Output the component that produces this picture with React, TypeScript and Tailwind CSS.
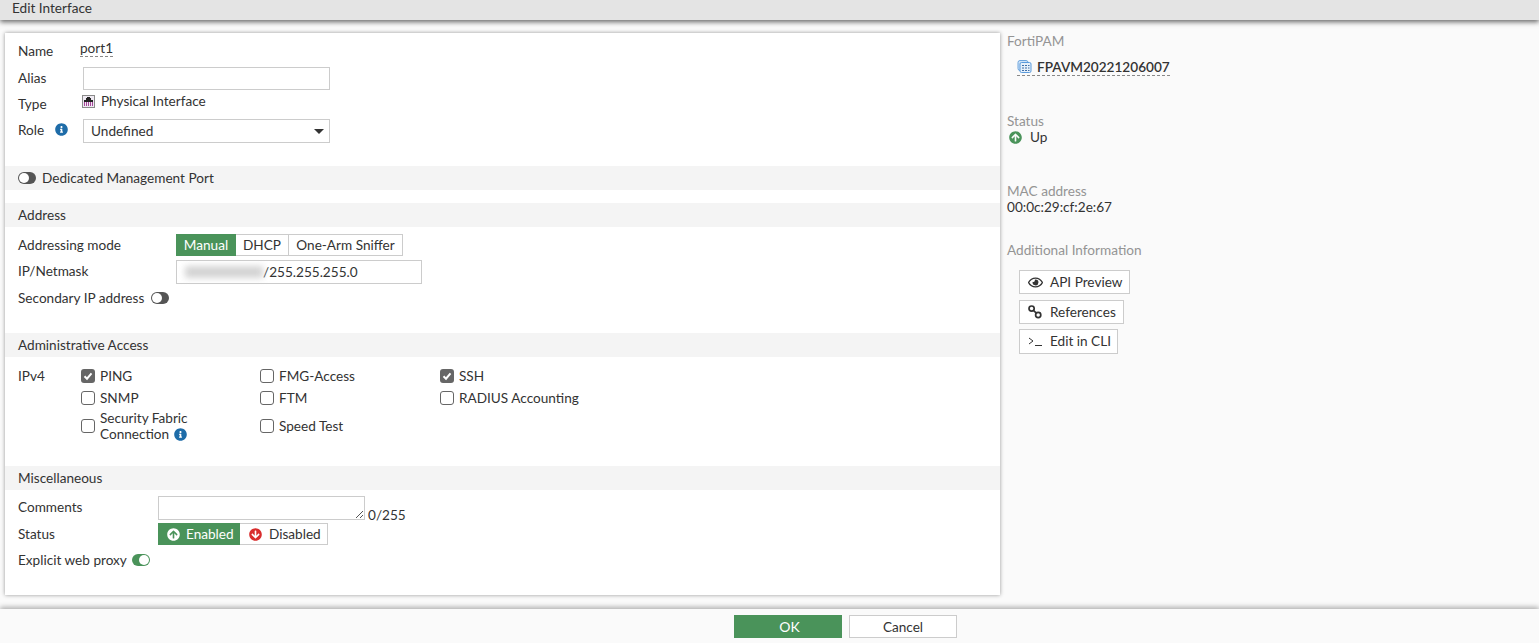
import React from "react";
import { FaInfoCircle, FaArrowCircleUp, FaArrowCircleDown, FaRegEye } from "react-icons/fa";

function Toggle({ on }: { on?: boolean }) {
    return (
        <span
            className={
                on
                    ? "flex h-[12px] w-[18px] shrink-0 items-center justify-end rounded-full bg-[#4a935a] pr-[1px]"
                    : "flex h-[12px] w-[18px] shrink-0 items-center justify-start rounded-full bg-[#555555] pl-[1px]"
            }
        >
            <span className="size-[10px] rounded-full bg-white" />
        </span>
    );
}

function Check({ checked }: { checked?: boolean }) {
    return (
        <span
            className={
                checked
                    ? "flex size-[14px] shrink-0 items-center justify-center rounded-[3px] bg-[#666666]"
                    : "flex size-[14px] shrink-0 items-center justify-center rounded-[3px] border border-[#666666] bg-white"
            }
        >
            {checked && (
                <svg viewBox="0 0 12 12" className="size-[12px]">
                    <path d="M2.5 6.2 L5 8.7 L9.5 3.4" fill="none" stroke="#fff" strokeWidth="2" />
                </svg>
            )}
        </span>
    );
}

function SectionHead({ children }: { children: React.ReactNode }) {
    return <div className="flex h-6 items-center gap-[6px] bg-[#f4f4f4] pl-[13px]">{children}</div>;
}

function Option({ checked, children }: { checked?: boolean; children: React.ReactNode }) {
    return (
        <div className="flex h-[22px] items-center gap-[5px]">
            <Check checked={checked} />
            <span>{children}</span>
        </div>
    );
}

function PortIcon() {
    return (
        <svg viewBox="0 0 13 13" className="size-[13px]">
            <rect x="0.5" y="0.5" width="12" height="12" fill="#efeaf2" stroke="#8a8a8a" />
            <path d="M2 7 V5 H4 V3 H5 V2 H8 V3 H9 V5 H11 V7 Z" fill="#222" />
            <path d="M2.5 11 V7 M4.5 11 V7 M6.5 11 V7 M8.5 11 V7 M10.5 11 V7" stroke="#a6479a" strokeWidth="1" />
        </svg>
    );
}

function DeviceIcon() {
    return (
        <svg viewBox="0 0 15 15" className="size-[15px]">
            <rect x="1" y="1.5" width="10" height="10" rx="2" fill="#cfe3f7" stroke="#6ea6de" />
            <rect x="3" y="3.5" width="11" height="10" rx="1.5" fill="#e6f0fa" stroke="#5b9bdc" />
            <path d="M5 6.5 H12.5 M5 9 H12.5 M5 11.5 H12.5" stroke="#3f6fa8" strokeWidth="1.2" strokeDasharray="2 1" />
        </svg>
    );
}

function LinkIcon() {
    return (
        <svg viewBox="0 0 14 14" className="size-[14px]">
            <circle cx="3.6" cy="3.6" r="2.6" fill="none" stroke="#333" strokeWidth="1.7" />
            <circle cx="10.2" cy="10" r="2.6" fill="none" stroke="#333" strokeWidth="1.7" />
            <path d="M5.4 5.4 L8.4 8.2" stroke="#333" strokeWidth="1.7" />
        </svg>
    );
}

function CliIcon() {
    return (
        <svg viewBox="0 0 15 12" className="h-3 w-[15px]">
            <path d="M1 3 L5 6 L1 9" fill="none" stroke="#333" strokeWidth="1" />
            <path d="M7 10.5 H14" stroke="#333" strokeWidth="1" />
        </svg>
    );
}

function SideButton({ icon, children, wide }: { icon: React.ReactNode; children: React.ReactNode; wide: string }) {
    return (
        <div className={"flex items-center border border-[#cccccc] bg-white pl-2 " + wide}>
            <span className="flex w-[22px] shrink-0 justify-start">{icon}</span>
            <span>{children}</span>
        </div>
    );
}

export default function App() {
    return (
        <div className="flex h-[643px] w-full flex-col overflow-hidden bg-[#fafafa] font-['Lato','Liberation_Sans',sans-serif] text-[13.6px] leading-4 text-[#333333]">
            <div className="relative z-10 h-5 shrink-0 bg-[#e4e4e4] pl-3 shadow-[0_2px_5px_rgba(0,0,0,0.6)]">
                Edit Interface
            </div>

            <div className="flex min-h-0 flex-1 pl-[5px] pt-[13px]">
                {/* main form */}
                <div className="h-[562px] w-[995px] shrink-0 bg-white shadow-[0_0_4px_rgba(0,0,0,0.4)]">
                    <div className="h-[133px] pl-[13px]">
                        <div className="flex h-[33px] pt-[10px]">
                            <span className="w-[62px]">Name</span>
                            <span className="-mt-[3px] h-[17px] border-b border-dashed border-[#888888]">port1</span>
                        </div>
                        <div className="flex h-6 items-center">
                            <span className="w-[65px]">Alias</span>
                            <div className="h-[23px] w-[247px] border border-[#cccccc] bg-white" />
                        </div>
                        <div className="flex h-[29px] pt-[6px]">
                            <span className="w-[64px]">Type</span>
                            <span className="-mt-[3px] flex h-4 items-center gap-[6px]">
                                <PortIcon />
                                Physical Interface
                            </span>
                        </div>
                        <div className="flex h-6 items-center">
                            <span className="-mt-[2px] w-[37px]">Role</span>
                            <span className="flex w-[28px] justify-start">
                                <FaInfoCircle className="-mt-[3px] text-[13px] text-[#1e6ca8]" />
                            </span>
                            <div className="flex h-6 w-[247px] items-center justify-between border border-[#cccccc] bg-white pl-[7px] pr-[3px]">
                                <span>Undefined</span>
                                <svg viewBox="0 0 12 6" className="mr-[2px] h-[5px] w-[10px]">
                                    <path d="M0 0 H12 L6 6 Z" fill="#333" />
                                </svg>
                            </div>
                        </div>
                    </div>

                    <SectionHead>
                        <Toggle />
                        <span>Dedicated Management Port</span>
                    </SectionHead>
                    <div className="h-[13px]" />

                    <SectionHead>Address</SectionHead>
                    <div className="h-[106px] pl-[13px] pt-[7px]">
                        <div className="flex h-[22px] items-center">
                            <span className="w-[158px]">Addressing mode</span>
                            <div className="flex h-[22px]">
                                <span className="flex w-[60px] items-center justify-center bg-[#4a935a] text-white">Manual</span>
                                <span className="flex w-[53px] items-center justify-center border-y border-r border-[#cccccc]">DHCP</span>
                                <span className="flex w-[114px] items-center justify-center border-y border-r border-[#cccccc]">One-Arm Sniffer</span>
                            </div>
                        </div>
                        <div className="mt-[4px] flex h-6 items-center">
                            <span className="-mt-[2px] w-[158px]">IP/Netmask</span>
                            <div className="flex h-6 w-[246px] items-center border border-[#cccccc] bg-white pl-2">
                                <span className="h-[12px] w-[78px] bg-[#d4d4d4] blur-[3px]" />
                                <span>/255.255.255.0</span>
                            </div>
                        </div>
                        <div className="mt-[2px] flex h-6 items-center gap-[7px]">
                            <span>Secondary IP address</span>
                            <Toggle />
                        </div>
                    </div>

                    <SectionHead>Administrative Access</SectionHead>
                    <div className="flex h-[109px] pl-[13px] pt-2">
                        <span className="w-[63px] pt-[3px]">IPv4</span>
                        <div className="grid w-[540px] grid-cols-[179px_180px_1fr] content-start">
                            <Option checked>PING</Option>
                            <Option>FMG-Access</Option>
                            <Option checked>SSH</Option>
                            <Option>SNMP</Option>
                            <Option>FTM</Option>
                            <Option>RADIUS Accounting</Option>
                            <div className="flex h-[34px] items-center gap-[5px]">
                                <Check />
                                <span>
                                    Security Fabric
                                    <br />
                                    <span className="inline-flex items-center gap-[5px]">
                                        Connection
                                        <FaInfoCircle className="text-[13px] text-[#1e6ca8]" />
                                    </span>
                                </span>
                            </div>
                            <div className="flex h-[34px] items-center gap-[5px]">
                                <Check />
                                <span>Speed Test</span>
                            </div>
                        </div>
                    </div>

                    <SectionHead>Miscellaneous</SectionHead>
                    <div className="pl-[13px] pt-[6px]">
                        <div className="flex h-6 items-start">
                            <span className="w-[140px] pt-[3px]">Comments</span>
                            <div className="relative h-6 w-[207px] border border-[#cccccc] bg-white">
                                <svg viewBox="0 0 9 9" className="absolute bottom-0 right-0 size-[9px]">
                                    <path d="M1 8 L8 1 M5 8 L8 5" stroke="#555" strokeWidth="1" />
                                </svg>
                            </div>
                            <span className="ml-[3px] mt-[11px]">0/255</span>
                        </div>
                        <div className="mt-[3px] flex h-[22px] items-center">
                            <span className="w-[140px]">Status</span>
                            <div className="flex h-[22px]">
                                <span className="flex w-[82px] items-center gap-[6px] bg-[#4a935a] pl-[9px] text-white">
                                    <FaArrowCircleUp className="text-[13px]" />
                                    Enabled
                                </span>
                                <span className="flex w-[88px] items-center gap-[7px] border-y border-r border-[#cccccc] pl-[9px]">
                                    <FaArrowCircleDown className="text-[13px] text-[#d92d2d]" />
                                    Disabled
                                </span>
                            </div>
                        </div>
                        <div className="mt-[4px] flex h-[22px] items-center gap-[5px]">
                            <span>Explicit web proxy</span>
                            <Toggle on />
                        </div>
                    </div>
                </div>

                {/* side panel */}
                <div className="pl-[7px]">
                    <div className="text-[#949494]">FortiPAM</div>
                    <div className="ml-[10px] mt-[9px] flex h-[18px] w-fit items-center gap-[5px] border-b border-dashed border-[#888888]">
                        <DeviceIcon />
                        <span className="font-semibold">FPAVM20221206007</span>
                    </div>
                    <div className="mt-[37px] text-[#949494]">Status</div>
                    <div className="flex items-center gap-[8px]">
                        <FaArrowCircleUp className="ml-[2px] text-[13px] text-[#4a935a]" />
                        Up
                    </div>
                    <div className="mt-[38px] text-[#949494]">MAC address</div>
                    <div>00:0c:29:cf:2e:67</div>
                    <div className="mt-[27px] text-[#949494]">Additional Information</div>
                    <div className="ml-3 mt-[12px] flex flex-col">
                        <SideButton icon={<FaRegEye className="text-[15px]" />} wide="h-6 w-[111px]">API Preview</SideButton>
                        <SideButton icon={<LinkIcon />} wide="mt-[6px] h-6 w-[105px]">References</SideButton>
                        <SideButton icon={<CliIcon />} wide="mt-[5px] h-[25px] w-[99px] pb-[2px]">Edit in CLI</SideButton>
                    </div>
                </div>
            </div>

            <div className="relative z-10 flex h-[34px] shrink-0 items-center justify-center gap-[7px] bg-[#fafafa] pl-[152px] pt-[1px] shadow-[0_-2px_5px_rgba(0,0,0,0.3)]">
                <div className="flex h-[23px] w-[108px] items-center justify-center bg-[#4a935a] pl-[3px] text-[14px] text-white">OK</div>
                <div className="flex h-[23px] w-[108px] items-center justify-center border border-[#cccccc] bg-white">Cancel</div>
            </div>
        </div>
    );
}
